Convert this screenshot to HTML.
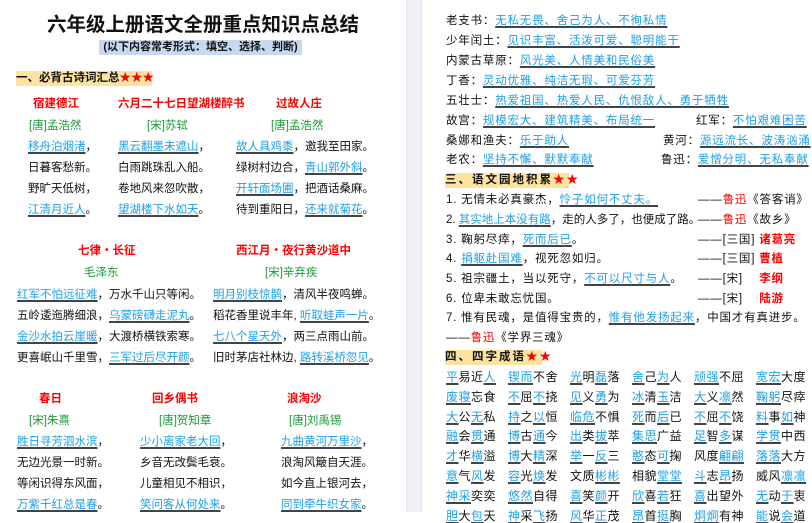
<!DOCTYPE html>
<html><head><meta charset="utf-8"><style>
*{margin:0;padding:0}
body{width:812px;height:512px;overflow:hidden;background:#fff;position:relative;font-family:"Liberation Sans","Noto Sans CJK SC",sans-serif;font-size:11.5px;color:#111}
.l{position:absolute;white-space:nowrap;line-height:14px}
u{color:#1ea0e8;text-decoration:underline;text-decoration-color:#444;text-decoration-thickness:1.5px;text-underline-offset:2px}
.r{color:#f00}.g{color:#1a9a3a}.t{color:#f00;font-weight:bold}
.gap{position:absolute;left:406px;top:0;width:14px;height:512px;background:#eef0f6;border-left:1px solid #e2e5ec;border-right:1px solid #e2e5ec}
.R{letter-spacing:.8px}
</style></head><body>
<div class="gap"></div>
<div class="l" style="left:0;width:406px;text-align:center;top:13px;font-size:19.5px;font-weight:bold;line-height:24px">六年级上册语文全册重点知识点总结</div>
<div class="l" style="left:99px;top:40px;width:203px;height:15px;background:#c6d9f0;text-align:center;font-weight:bold;font-size:11px">(以下内容常考形式：填空、选择、判断)</div>
<div class="l" style="left:16px;top:71px;width:136px;height:15px;background:#fde3a0;font-weight:bold">一、必背古诗词汇总<span class="r">★★★</span></div>

<div class="l t" style="left:33px;top:97px">宿建德江</div>
<div class="l t" style="left:118px;top:97px">六月二十七日望湖楼醉书</div>
<div class="l t" style="left:276px;top:97px">过故人庄</div>
<div class="l g" style="left:29px;top:119px">[唐]孟浩然</div>
<div class="l g" style="left:147px;top:119px">[宋]苏轼</div>
<div class="l g" style="left:271px;top:119px">[唐]孟浩然</div>
<div class="l" style="left:28px;top:140px"><u>移舟泊烟渚</u>，</div>
<div class="l" style="left:28px;top:161px">日暮客愁新。</div>
<div class="l" style="left:28px;top:182px">野旷天低树，</div>
<div class="l" style="left:28px;top:203px"><u>江清月近人</u>。</div>
<div class="l" style="left:118px;top:140px"><u>黑云翻墨未遮山</u>，</div>
<div class="l" style="left:118px;top:161px">白雨跳珠乱入船。</div>
<div class="l" style="left:118px;top:182px">卷地风来忽吹散，</div>
<div class="l" style="left:118px;top:203px"><u>望湖楼下水如天</u>。</div>
<div class="l" style="left:236px;top:140px"><u>故人具鸡黍</u>，邀我至田家。</div>
<div class="l" style="left:236px;top:161px">绿树村边合，<u>青山郭外斜</u>。</div>
<div class="l" style="left:236px;top:182px"><u>开轩面场圃</u>，把酒话桑麻。</div>
<div class="l" style="left:236px;top:203px">待到重阳日，<u>还来就菊花</u>。</div>

<div class="l t" style="left:78px;top:244px">七律・长征</div>
<div class="l t" style="left:236px;top:244px">西江月・夜行黄沙道中</div>
<div class="l g" style="left:84px;top:266px">毛泽东</div>
<div class="l g" style="left:265px;top:266px">[宋]辛弃疾</div>
<div class="l" style="left:17px;top:288px"><u>红军不怕远征难</u>，万水千山只等闲。</div>
<div class="l" style="left:17px;top:309px">五岭逶迤腾细浪，<u>乌蒙磅礴走泥丸</u>。</div>
<div class="l" style="left:17px;top:330px"><u>金沙水拍云崖暖</u>，大渡桥横铁索寒。</div>
<div class="l" style="left:17px;top:351px">更喜岷山千里雪，<u>三军过后尽开颜</u>。</div>
<div class="l" style="left:213px;top:288px"><u>明月别枝惊鹊</u>，清风半夜鸣蝉。</div>
<div class="l" style="left:213px;top:309px">稻花香里说丰年, <u>听取蛙声一片</u>。</div>
<div class="l" style="left:213px;top:330px"><u>七八个星天外</u>，两三点雨山前。</div>
<div class="l" style="left:213px;top:351px">旧时茅店社林边, <u>路转溪桥忽见</u>。</div>

<div class="l t" style="left:39px;top:392px">春日</div>
<div class="l t" style="left:152px;top:392px">回乡偶书</div>
<div class="l t" style="left:287px;top:392px">浪淘沙</div>
<div class="l g" style="left:29px;top:414px">[宋]朱熹</div>
<div class="l g" style="left:159px;top:414px">[唐]贺知章</div>
<div class="l g" style="left:289px;top:414px">[唐]刘禹锡</div>
<div class="l" style="left:17px;top:435px"><u>胜日寻芳泗水滨</u>，</div>
<div class="l" style="left:17px;top:456px">无边光景一时新。</div>
<div class="l" style="left:17px;top:477px">等闲识得东风面，</div>
<div class="l" style="left:17px;top:498px"><u>万紫千红总是春</u>。</div>
<div class="l" style="left:140px;top:435px"><u>少小离家老大回</u>，</div>
<div class="l" style="left:140px;top:456px">乡音无改鬓毛衰。</div>
<div class="l" style="left:140px;top:477px">儿童相见不相识，</div>
<div class="l" style="left:140px;top:498px"><u>笑问客从何处来</u>。</div>
<div class="l" style="left:281px;top:435px"><u>九曲黄河万里沙</u>，</div>
<div class="l" style="left:281px;top:456px">浪淘风簸自天涯。</div>
<div class="l" style="left:281px;top:477px">如今直上银河去，</div>
<div class="l" style="left:281px;top:498px"><u>同到牵牛织女家</u>。</div>

<div class="R">
<div class="l" style="left:446px;top:14px">老支书：<u>无私无畏、舍己为人、不徇私情</u></div>
<div class="l" style="left:446px;top:34px">少年闰土：<u>见识丰富、活泼可爱、聪明能干</u></div>
<div class="l" style="left:446px;top:54px">内蒙古草原：<u>风光美、人情美和民俗美</u></div>
<div class="l" style="left:446px;top:74px">丁香：<u>灵动优雅、纯洁无瑕、可爱芬芳</u></div>
<div class="l" style="left:446px;top:94px">五壮士：<u>热爱祖国、热爱人民、仇恨敌人、勇于牺牲</u></div>
<div class="l" style="left:446px;top:114px">故宫：<u>规模宏大、建筑精美、布局统一</u></div>
<div class="l" style="left:696px;top:114px">红军：<u>不怕艰难困苦</u></div>
<div class="l" style="left:446px;top:134px">桑娜和渔夫：<u>乐于助人</u></div>
<div class="l" style="left:663px;top:134px">黄河：<u>源远流长、波涛汹涌</u></div>
<div class="l" style="left:446px;top:153px">老农：<u>坚持不懈、默默奉献</u></div>
<div class="l" style="left:661px;top:153px">鲁迅：<u>爱憎分明、无私奉献</u></div>
<div class="l" style="left:445px;top:173px;width:124px;height:15px;background:#fde3a0;font-weight:bold;letter-spacing:2px">三、语文园地积累<span class="r">★★</span></div>
<div class="l" style="left:446px;top:193px">1. 无情未必真豪杰，<u>怜子如何不丈夫。</u></div>
<div class="l" style="left:698px;top:193px">——<span class="r">鲁迅</span>《答客诮》</div>
<div class="l" style="left:446px;top:213px;letter-spacing:0">2. <u>其实地上本没有路</u>，走的人多了，也便成了路。</div>
<div class="l" style="left:698px;top:213px">——<span class="r">鲁迅</span>《故乡》</div>
<div class="l" style="left:446px;top:233px">3. 鞠躬尽瘁，<u>死而后已</u>。</div>
<div class="l" style="left:698px;top:233px">——[三国] <span class="t">诸葛亮</span></div>
<div class="l" style="left:446px;top:252px">4. <u>捐躯赴国难</u>，视死忽如归。</div>
<div class="l" style="left:698px;top:252px">——[三国] <span class="t">曹植</span></div>
<div class="l" style="left:446px;top:272px">5. 祖宗疆土，当以死守，<u>不可以尺寸与人</u>。</div>
<div class="l" style="left:698px;top:272px">——[宋]　 <span class="t">李纲</span></div>
<div class="l" style="left:446px;top:292px">6. 位卑未敢忘忧国。</div>
<div class="l" style="left:698px;top:292px">——[宋]　 <span class="t">陆游</span></div>
<div class="l" style="left:446px;top:311px">7. 惟有民魂，是值得宝贵的，<u>惟有他发扬起来</u>，中国才有真进步。</div>
<div class="l" style="left:446px;top:331px">——<span class="r">鲁迅</span>《学界三魂》</div>
<div class="l" style="left:445px;top:350px;width:97px;height:15px;background:#fde3a0;font-weight:bold;letter-spacing:2px">四、四字成语<span class="r">★★</span></div>
</div>
<div id="id"></div>
<script>
var rows=[
["<u>平</u>易近<u>人</u>","<u>锲而</u>不舍","<u>光</u>明<u>磊</u>落","<u>舍</u>己<u>为</u>人","<u>顽强</u>不屈","<u>宽宏</u>大度"],
["<u>废寝</u>忘食","<u>不</u>屈<u>不</u>挠","<u>见</u>义<u>勇</u>为","<u>冰</u>清<u>玉</u>洁","<u>大</u>义<u>凛</u>然","<u>鞠躬</u>尽瘁"],
["<u>大</u>公<u>无</u>私","<u>持</u>之<u>以</u>恒","<u>临危</u>不惧","<u>死</u>而<u>后</u>已","<u>不</u>屈<u>不</u>饶","<u>料</u>事<u>如</u>神"],
["<u>融</u>会<u>贯</u>通","<u>博</u>古<u>通</u>今","<u>出</u>类<u>拔</u>萃","<u>集思</u>广益","<u>足</u>智<u>多</u>谋","<u>学贯</u>中西"],
["<u>才</u>华<u>横</u>溢","<u>博</u>大<u>精</u>深","<u>举</u>一<u>反</u>三","<u>憨</u>态<u>可</u>掬","风度<u>翩翩</u>","<u>落落</u>大方"],
["<u>意</u>气<u>风</u>发","<u>容</u>光<u>焕</u>发","文质<u>彬彬</u>","相貌<u>堂堂</u>","<u>斗</u>志<u>昂</u>扬","威风<u>凛凛</u>"],
["<u>神采</u>奕奕","<u>悠然</u>自得","<u>喜</u>笑<u>颜</u>开","<u>欣</u>喜<u>若</u>狂","<u>喜</u>出望外","<u>无</u>动<u>于</u>衷"],
["<u>胆</u>大<u>包</u>天","<u>神</u>采<u>飞</u>扬","<u>风</u>华<u>正</u>茂","<u>昂</u>首<u>挺</u>胸","<u>炯炯</u>有神","<u>能</u>说<u>会</u>道"]];
var h="",xs=[446,508,570,632,694,756];
rows.forEach(function(r,i){r.forEach(function(c,j){h+='<div class="l" style="font-size:12px;letter-spacing:.5px;left:'+xs[j]+'px;top:'+(370+i*19.8)+'px">'+c+'</div>';});});
document.getElementById("id").innerHTML=h;
</script>
</body></html>
